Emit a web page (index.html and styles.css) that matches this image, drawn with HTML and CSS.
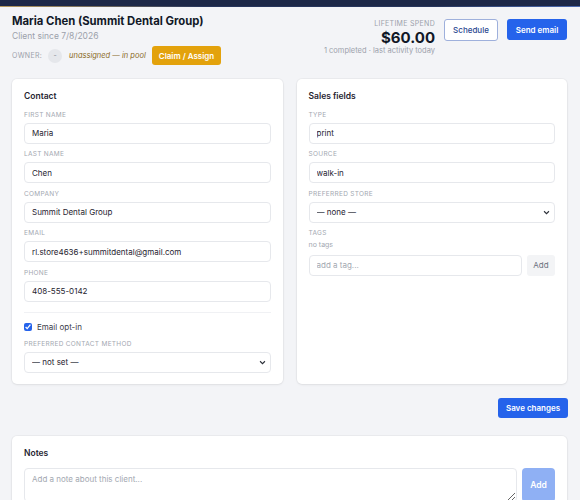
FILE: index.html
```html
<!DOCTYPE html>
<html lang="en">
<head>
    <meta charset="UTF-8">
    <meta name="viewport" content="width=device-width, initial-scale=1.0">
    <title>Maria Chen - Client</title>
    <link rel="stylesheet" href="styles.css">
</head>
<body>
    <div class="topbar"></div>

    <div class="page">
        <div class="header">
            <div class="client-info">
                <h1>Maria Chen (Summit Dental Group)</h1>
                <div class="since">Client since 7/8/2026</div>
                <div class="owner-row">
                    <span class="owner-label">Owner:</span>
                    <span class="avatar">-</span>
                    <span class="pool">unassigned — in pool</span>
                    <button class="btn btn-claim">Claim / Assign</button>
                </div>
            </div>
            <div class="header-right">
                <div class="spend">
                    <div class="spend-label">Lifetime spend</div>
                    <div class="spend-value">$60.00</div>
                    <div class="spend-meta">1 completed · last activity today</div>
                </div>
                <button class="btn btn-outline">Schedule</button>
                <button class="btn btn-primary">Send email</button>
            </div>
        </div>

        <div class="cards">
            <div class="card">
                <div class="card-title">Contact</div>
                <div class="field">
                    <label for="firstName">First name</label>
                    <input type="text" id="firstName" value="Maria">
                </div>
                <div class="field">
                    <label for="lastName">Last name</label>
                    <input type="text" id="lastName" value="Chen">
                </div>
                <div class="field">
                    <label for="company">Company</label>
                    <input type="text" id="company" value="Summit Dental Group">
                </div>
                <div class="field">
                    <label for="email">Email</label>
                    <input type="email" id="email" value="rl.store4636+summitdental@gmail.com">
                </div>
                <div class="field">
                    <label for="phone">Phone</label>
                    <input type="text" id="phone" value="408-555-0142">
                </div>
                <div class="divider"></div>
                <label class="check-row">
                    <input type="checkbox" checked> Email opt-in
                </label>
                <div class="field last">
                    <label for="contactMethod">Preferred contact method</label>
                    <div class="select-wrap">
                        <select id="contactMethod">
                            <option>— not set —</option>
                            <option>Email</option>
                            <option>Phone</option>
                        </select>
                        <svg class="chevron" viewBox="0 0 10 6"><path d="M1.5 1.2 5 4.6l3.5-3.4"/></svg>
                    </div>
                </div>
            </div>

            <div class="card">
                <div class="card-title">Sales fields</div>
                <div class="field">
                    <label for="type">Type</label>
                    <input type="text" id="type" value="print">
                </div>
                <div class="field">
                    <label for="source">Source</label>
                    <input type="text" id="source" value="walk-in">
                </div>
                <div class="field">
                    <label for="store">Preferred store</label>
                    <div class="select-wrap">
                        <select id="store">
                            <option>— none —</option>
                        </select>
                        <svg class="chevron" viewBox="0 0 10 6"><path d="M1.5 1.2 5 4.6l3.5-3.4"/></svg>
                    </div>
                </div>
                <div class="field">
                    <label>Tags</label>
                    <div class="no-tags">no tags</div>
                    <div class="tag-row">
                        <input type="text" placeholder="add a tag...">
                        <button class="btn btn-light">Add</button>
                    </div>
                </div>
            </div>
        </div>

        <div class="save-row">
            <button class="btn btn-primary btn-save">Save changes</button>
        </div>

        <div class="card notes">
            <div class="card-title">Notes</div>
            <div class="note-row">
                <textarea placeholder="Add a note about this client..."></textarea>
                <button class="btn btn-add-note" disabled>Add</button>
            </div>
        </div>
    </div>
</body>
</html>
```

FILE: styles.css
```css
* {
    box-sizing: border-box;
    margin: 0;
    padding: 0;
}

body {
    font-family: Inter, "Noto Sans", sans-serif;
    background-color: #f3f4f7;
    color: #111827;
    overflow: hidden;
}

.topbar {
    height: 7px;
    background: #1d2848;
    border-bottom: 1px solid transparent;
    border-image: linear-gradient(90deg, #b89b5e, #27355c 35%, #27355c 75%, #4d6cb3) 1;
}

.page {
    padding: 0 13px 0 12px;
}

/* header */
.header {
    display: flex;
    justify-content: space-between;
    align-items: flex-start;
}

h1 {
    font-size: 11.3px;
    font-weight: 700;
    line-height: 17px;
    margin-top: 6px;
}

.since {
    font-size: 8.5px;
    line-height: 12px;
    color: #9ca1ab;
}

.owner-row {
    display: flex;
    align-items: center;
    gap: 6px;
    margin-top: 4px;
}

.owner-label {
    font-size: 7px;
    text-transform: uppercase;
    letter-spacing: 0.3px;
    color: #9ca1ab;
}

.avatar {
    width: 14px;
    height: 14px;
    border-radius: 50%;
    background: #e5e7eb;
    color: #8a8f99;
    font-size: 7px;
    display: flex;
    align-items: center;
    justify-content: center;
}

.pool {
    font-size: 7.5px;
    font-style: italic;
    color: #8a6a1f;
    margin-left: 1px;
}

.header-right {
    display: flex;
    align-items: flex-start;
    gap: 9px;
    margin-top: 12px;
}

.spend {
    text-align: right;
}

.spend-label {
    font-size: 7px;
    line-height: 9px;
    text-transform: uppercase;
    letter-spacing: 0.3px;
    color: #9ca1ab;
}

.spend-value {
    font-size: 15px;
    font-weight: 700;
    line-height: 17px;
    margin-top: 1px;
}

.spend-meta {
    font-size: 7.5px;
    line-height: 10px;
    color: #9ca1ab;
}

/* buttons */
.btn {
    font-family: inherit;
    border: none;
    border-radius: 3px;
    cursor: pointer;
    font-size: 8.5px;
}

.btn-claim {
    height: 19px;
    padding: 0 7px;
    background: #e3a20c;
    color: #fff;
    font-size: 8px;
    font-weight: 600;
}

.btn-outline {
    height: 22px;
    width: 54px;
    background: #fff;
    border: 1px solid #9eb0dc;
    color: #2a4791;
    font-size: 8px;
    font-weight: 500;
}

.btn-primary {
    height: 21px;
    width: 60px;
    background: #2563eb;
    color: #fff;
    font-size: 8px;
    font-weight: 600;
}

.btn-light {
    height: 21px;
    width: 28px;
    background: #f3f4f6;
    color: #6b7280;
    font-size: 8px;
}

/* cards */
.cards {
    display: grid;
    grid-template-columns: 1fr 1fr;
    gap: 14px;
    margin-top: 14px;
}

.card {
    background: white;
    border-radius: 5px;
    padding: 10.5px 12px 11px;
    box-shadow: 0 0 0 1px rgba(0, 0, 0, 0.03), 0 1px 3px rgba(0, 0, 0, 0.06);
}

.card-title {
    font-size: 8.5px;
    font-weight: 600;
    line-height: 12px;
    margin-bottom: 8px;
    color: #1f2430;
}

.field {
    margin-bottom: 5.5px;
}

.field.last {
    margin-bottom: 0;
}

.field > label {
    display: block;
    font-size: 6.5px;
    line-height: 10px;
    text-transform: uppercase;
    letter-spacing: 0.3px;
    color: #a3a8b1;
    margin-bottom: 3px;
}

input[type="text"], input[type="email"], select, textarea {
    display: block;
    width: 100%;
    height: 21px;
    padding: 0 7px;
    border: 1px solid #e6e8ec;
    border-radius: 4px;
    background: #fff;
    font-family: inherit;
    font-size: 8px;
    color: #1f2430;
    outline: none;
}

input::placeholder, textarea::placeholder {
    color: #a3a8b1;
}

.select-wrap {
    position: relative;
}

select {
    appearance: none;
    padding: 0 7px;
}

.chevron {
    position: absolute;
    right: 5px;
    top: 8px;
    width: 7px;
    height: 5px;
    fill: none;
    stroke: #2b2f38;
    stroke-width: 1.6;
    pointer-events: none;
}

.divider {
    border-top: 1px solid #f0f1f4;
    margin-top: 10px;
}

.check-row {
    display: flex;
    align-items: center;
    gap: 5px;
    font-size: 8px;
    line-height: 12px;
    color: #3b404a;
    margin: 8px 0 6px;
}

.check-row input {
    width: 8px;
    height: 8px;
    accent-color: #2563eb;
}

.no-tags {
    font-size: 7px;
    line-height: 10px;
    color: #a3a8b1;
    margin-top: -1px;
}

.tag-row {
    display: flex;
    gap: 5.5px;
    margin-top: 4.5px;
}

.tag-row input {
    flex: 1;
}

.save-row {
    display: flex;
    justify-content: flex-end;
    margin-top: 14px;
}

.btn-save {
    width: 70px;
    height: 20px;
    margin-right: -1px;
}

.notes {
    margin-top: 18px;
    padding-top: 11.5px;
}

.notes .card-title {
    margin-bottom: 9px;
}

.note-row {
    display: flex;
    gap: 5px;
}

textarea {
    flex: 1;
    height: 34px;
    padding: 5px 7px;
    resize: vertical;
}

.btn-add-note {
    width: 33px;
    background: #8fb0f4;
    color: #fff;
    font-weight: 600;
    border-radius: 4px;
    cursor: default;
}
```
